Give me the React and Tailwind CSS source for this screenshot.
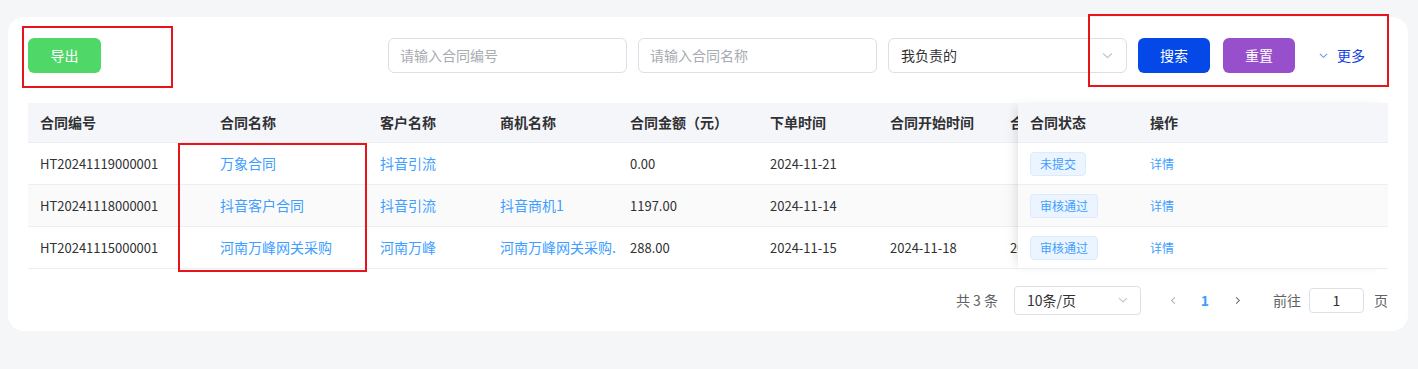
import React from 'react';

const FONT = { fontFamily: '"Noto Sans CJK SC", "Noto Sans", sans-serif' };

const rows = [
  { no: 'HT20241119000001', name: '万象合同', customer: '抖音引流', biz: '', amount: '0.00', order: '2024-11-21', start: '', end: '', status: '未提交' },
  { no: 'HT20241118000001', name: '抖音客户合同', customer: '抖音引流', biz: '抖音商机1', amount: '1197.00', order: '2024-11-14', start: '', end: '', status: '审核通过' },
  { no: 'HT20241115000001', name: '河南万峰网关采购', customer: '河南万峰', biz: '河南万峰网关采购.', amount: '288.00', order: '2024-11-15', start: '2024-11-18', end: '2024-11-30', status: '审核通过' },
];

// 滚动区的列宽，num = 数字列用小一号字
const COLS = [
  { key: 'no', title: '合同编号', w: 'w-[180px]', num: true },
  { key: 'name', title: '合同名称', w: 'w-[160px]', link: true },
  { key: 'customer', title: '客户名称', w: 'w-[120px]', link: true },
  { key: 'biz', title: '商机名称', w: 'w-[130px]', link: true },
  { key: 'amount', title: '合同金额（元）', w: 'w-[140px]', num: true },
  { key: 'order', title: '下单时间', w: 'w-[120px]', num: true },
  { key: 'start', title: '合同开始时间', w: 'w-[120px]', num: true },
  { key: 'end', title: '合同结束时间', w: 'w-[120px]', num: true },
];

const Chevron = ({ className, d = 'M2 4.2 L6 8 L10 4.2' }) => (
  <svg viewBox="0 0 12 12" className={className} fill="none" stroke="currentColor" strokeWidth="1.1">
    <path d={d} />
  </svg>
);

const Input = ({ placeholder }) => (
  <div className="w-[239px] h-[35px] border border-[#dcdfe6] rounded-[6px] flex items-center px-[11px] text-[14px] text-[#a8abb2]">
    {placeholder}
  </div>
);

const RedBox = ({ className }) => (
  <div className={`absolute border-2 border-[#e8141c] pointer-events-none ${className}`} />
);

export default function App() {
  return (
    <div className="relative w-[1418px] h-[369px] bg-[#f5f6f8] pt-[17px] px-[8px]" style={FONT}>
      <div className="w-[1400px] bg-white rounded-[16px] px-[20px] pt-[21px] pb-[16px]">
        {/* 工具栏 */}
        <div className="flex items-center justify-between h-[35px]">
          <button className="w-[73px] h-[35px] rounded-[6px] bg-[#4fd868] text-white text-[14px]">导出</button>
          <div className="flex items-center">
            <div className="flex items-center gap-[11px]">
              <Input placeholder="请输入合同编号" />
              <Input placeholder="请输入合同名称" />
              <div className="w-[239px] h-[35px] border border-[#dcdfe6] rounded-[6px] flex items-center justify-between pl-[12px] pr-[12px] text-[14px] text-[#303133]">
                <span>我负责的</span>
                <Chevron className="w-[13px] h-[13px] text-[#c0c4cc]" />
              </div>
            </div>
            <button className="ml-[11px] w-[72px] h-[35px] rounded-[6px] bg-[#0449e8] text-white text-[14px]">搜索</button>
            <button className="ml-[13px] w-[72px] h-[35px] rounded-[6px] bg-[#984fcb] text-white text-[14px]">重置</button>
            <div className="ml-[23px] mr-[23px] flex items-center gap-[8px] text-[14px] text-[#1440e0]">
              <Chevron className="w-[11px] h-[11px] text-[#6f8ff0]" />
              <span>更多</span>
            </div>
          </div>
        </div>

        {/* 表格 */}
        <div className="mt-[30px] flex text-[14px] text-[#303133]">
          <div className="w-[990px] overflow-hidden">
            <div className="flex w-max h-[40px] bg-[#f5f6fa] border-b border-[#ebeef5] font-bold">
              {COLS.map(c => (
                <div key={c.key} className={`${c.w} px-[12px] flex items-center whitespace-nowrap`}>{c.title}</div>
              ))}
            </div>
            {rows.map((r, i) => (
              <div key={r.no} className={`flex w-max h-[42px] border-b border-[#ebeef5] ${i % 2 === 1 ? 'bg-[#fafafa]' : 'bg-white'}`}>
                {COLS.map(c => (
                  <div key={c.key} className={`${c.w} px-[12px] flex items-center whitespace-nowrap overflow-hidden ${c.link ? 'text-[#409eff]' : ''} ${c.num ? 'text-[13px]' : ''}`}>{r[c.key]}</div>
                ))}
              </div>
            ))}
          </div>
          <div className="w-[370px] relative z-10 shadow-[-6px_0_10px_-4px_rgba(0,0,0,0.12)]">
            <div className="flex h-[40px] bg-[#f5f6fa] border-b border-[#ebeef5] font-bold">
              <div className="w-[120px] px-[12px] flex items-center">合同状态</div>
              <div className="flex-1 px-[12px] flex items-center">操作</div>
            </div>
            {rows.map((r, i) => (
              <div key={r.no} className={`flex h-[42px] border-b border-[#ebeef5] ${i % 2 === 1 ? 'bg-[#fafafa]' : 'bg-white'}`}>
                <div className="w-[120px] px-[12px] flex items-center">
                  <span className="h-[24px] px-[9px] flex items-center rounded-[4px] bg-[#ecf5ff] border border-[#d9ecff] text-[#409eff] text-[12px]">{r.status}</span>
                </div>
                <div className="flex-1 px-[12px] flex items-center text-[#409eff] text-[12px]">详情</div>
              </div>
            ))}
          </div>
        </div>

        {/* 分页 */}
        <div className="mt-[16px] flex items-center justify-end h-[30px] text-[14px] text-[#606266]">
          <span>共 3 条</span>
          <div className="ml-[16px] w-[127px] h-[29px] border border-[#dcdfe6] rounded-[4px] flex items-center justify-between pl-[12px] pr-[11px] text-[#303133]">
            <span>10条/页</span>
            <Chevron className="w-[12px] h-[12px] text-[#c0c4cc]" />
          </div>
          <div className="ml-[16px] flex items-center">
            <span className="w-[32px] flex justify-center text-[#a8abb2]">
              <Chevron className="w-[11px] h-[11px]" d="M7.5 2.5 L4 6 L7.5 9.5" />
            </span>
            <span className="w-[32px] text-center text-[#409eff] font-bold text-[14px]">1</span>
            <span className="w-[32px] flex justify-center text-[#606266]">
              <Chevron className="w-[11px] h-[11px]" d="M4.5 2.5 L8 6 L4.5 9.5" />
            </span>
          </div>
          <span className="ml-[20px]">前往</span>
          <div className="ml-[8px] w-[55px] h-[25px] border border-[#dcdfe6] rounded-[4px] flex items-center justify-center text-[#303133]">1</div>
          <span className="ml-[10px]">页</span>
        </div>
      </div>

      <RedBox className="left-[22px] top-[26px] w-[151px] h-[62px]" />
      <RedBox className="left-[1088px] top-[14px] w-[301px] h-[73px]" />
      <RedBox className="left-[178px] top-[143px] w-[189px] h-[129px]" />
      <RedBox className="left-[1110px] top-[109px] w-[144px] h-[154px]" />
    </div>
  );
}
